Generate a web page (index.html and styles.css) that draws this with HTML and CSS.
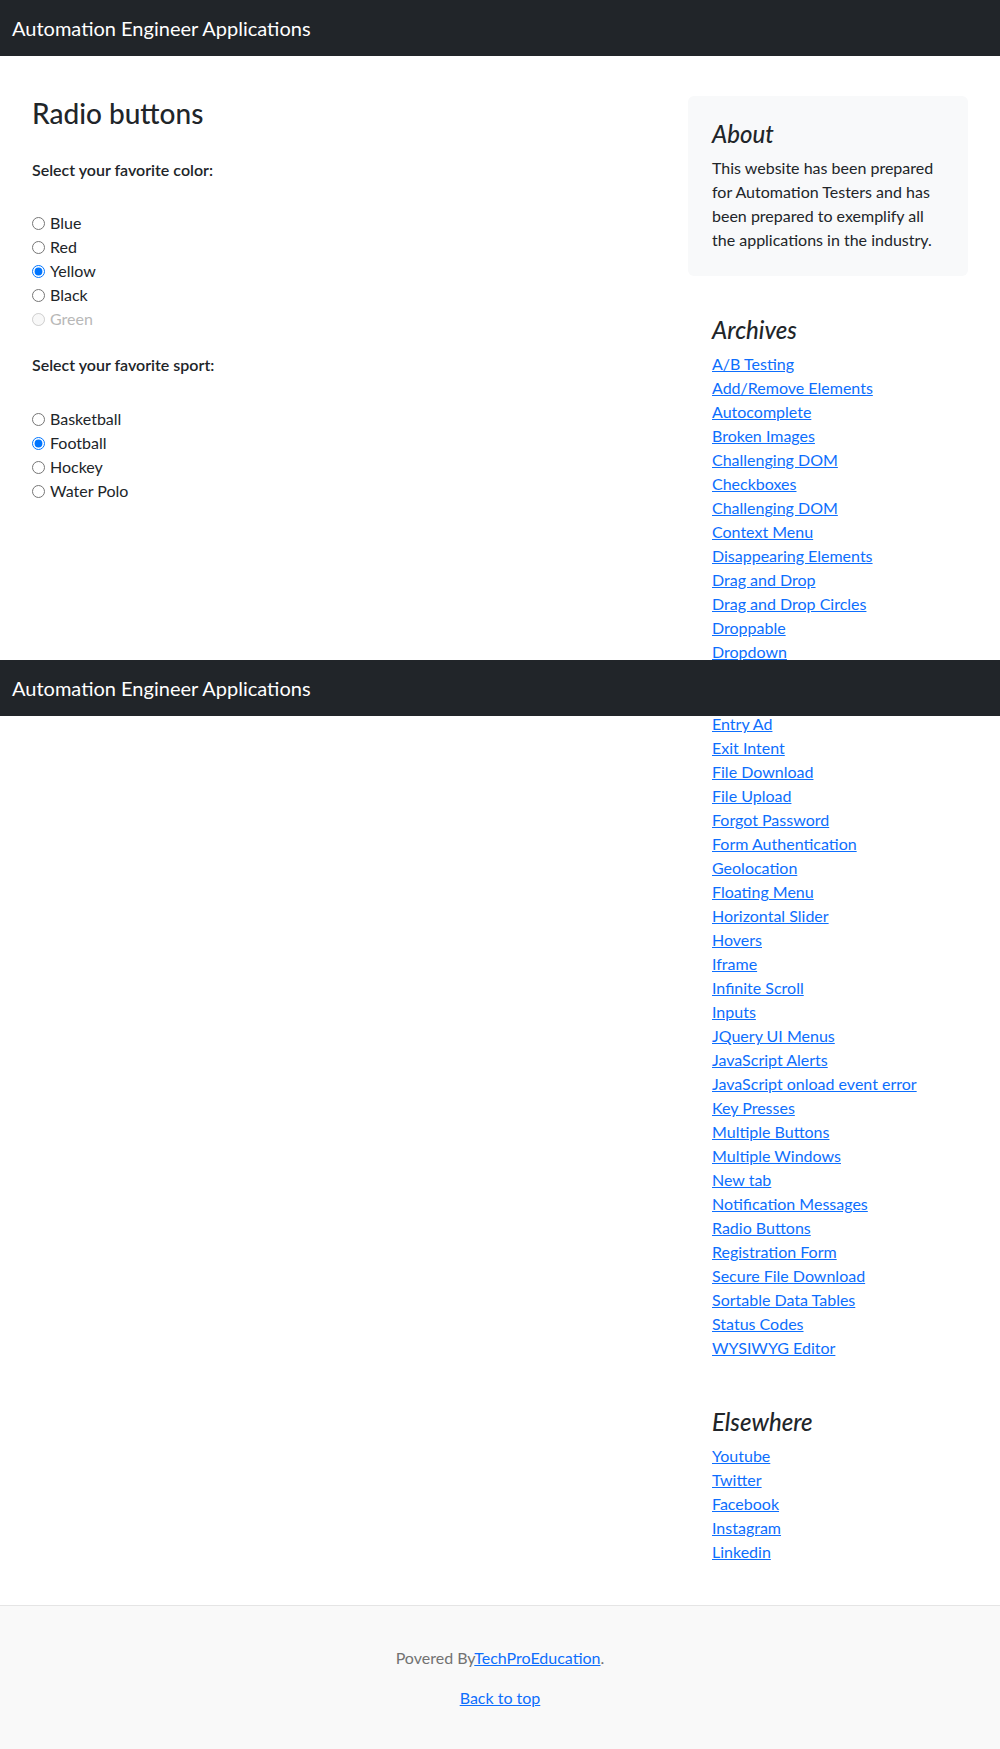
FILE: index.html
```html
<!DOCTYPE html>
<html lang="en">
<head>
<meta charset="utf-8">
<title>Radio buttons</title>
<link rel="stylesheet" href="styles.css">
</head>
<body>
<header class="navbar">
  <a class="brand" href="#">Automation Engineer Applications</a>
</header>

<main class="container">
  <div class="row">
    <div class="col-main">
      <h3 class="page-title">Radio buttons</h3>
      <div class="group-label">Select your favorite color:</div>
      <div class="options">
        <label class="option"><input type="radio" name="color" value="blue"><span>Blue</span></label>
        <label class="option"><input type="radio" name="color" value="red"><span>Red</span></label>
        <label class="option"><input type="radio" name="color" value="yellow" checked><span>Yellow</span></label>
        <label class="option"><input type="radio" name="color" value="black"><span>Black</span></label>
        <label class="option disabled"><input type="radio" name="color" value="green" disabled><span>Green</span></label>
      </div>
      <div class="group-label second">Select your favorite sport:</div>
      <div class="options">
        <label class="option"><input type="radio" name="sport" value="basketball"><span>Basketball</span></label>
        <label class="option"><input type="radio" name="sport" value="football" checked><span>Football</span></label>
        <label class="option"><input type="radio" name="sport" value="hockey"><span>Hockey</span></label>
        <label class="option"><input type="radio" name="sport" value="waterpolo"><span>Water Polo</span></label>
      </div>
    </div>

    <aside class="col-side">
      <div class="about">
        <h4 class="side-title">About</h4>
        <p class="about-text">This website has been prepared for Automation Testers and has been prepared to exemplify all the applications in the industry.</p>
      </div>

      <div class="side-block">
        <h4 class="side-title">Archives</h4>
        <ol class="links">
          <li><a href="#">A/B Testing</a></li>
          <li><a href="#">Add/Remove Elements</a></li>
          <li><a href="#">Autocomplete</a></li>
          <li><a href="#">Broken Images</a></li>
          <li><a href="#">Challenging DOM</a></li>
          <li><a href="#">Checkboxes</a></li>
          <li><a href="#">Challenging DOM</a></li>
          <li><a href="#">Context Menu</a></li>
          <li><a href="#">Disappearing Elements</a></li>
          <li><a href="#">Drag and Drop</a></li>
          <li><a href="#">Drag and Drop Circles</a></li>
          <li><a href="#">Droppable</a></li>
          <li><a href="#">Dropdown</a></li>
          <li><a href="#">Dynamic Content</a></li>
          <li><a href="#">Dynamic Controls</a></li>
          <li><a href="#">Entry Ad</a></li>
          <li><a href="#">Exit Intent</a></li>
          <li><a href="#">File Download</a></li>
          <li><a href="#">File Upload</a></li>
          <li><a href="#">Forgot Password</a></li>
          <li><a href="#">Form Authentication</a></li>
          <li><a href="#">Geolocation</a></li>
          <li><a href="#">Floating Menu</a></li>
          <li><a href="#">Horizontal Slider</a></li>
          <li><a href="#">Hovers</a></li>
          <li><a href="#">Iframe</a></li>
          <li><a href="#">Infinite Scroll</a></li>
          <li><a href="#">Inputs</a></li>
          <li><a href="#">JQuery UI Menus</a></li>
          <li><a href="#">JavaScript Alerts</a></li>
          <li><a href="#">JavaScript onload event error</a></li>
          <li><a href="#">Key Presses</a></li>
          <li><a href="#">Multiple Buttons</a></li>
          <li><a href="#">Multiple Windows</a></li>
          <li><a href="#">New tab</a></li>
          <li><a href="#">Notification Messages</a></li>
          <li><a href="#">Radio Buttons</a></li>
          <li><a href="#">Registration Form</a></li>
          <li><a href="#">Secure File Download</a></li>
          <li><a href="#">Sortable Data Tables</a></li>
          <li><a href="#">Status Codes</a></li>
          <li><a href="#">WYSIWYG Editor</a></li>
        </ol>
      </div>

      <div class="side-block">
        <h4 class="side-title">Elsewhere</h4>
        <ol class="links">
          <li><a href="#">Youtube</a></li>
          <li><a href="#">Twitter</a></li>
          <li><a href="#">Facebook</a></li>
          <li><a href="#">Instagram</a></li>
          <li><a href="#">Linkedin</a></li>
        </ol>
      </div>
    </aside>
  </div>
</main>

<footer class="footer">
  <p>Povered By<a href="#">TechProEducation</a>.</p>
  <p><a href="#">Back to top</a></p>
</footer>

<div class="navbar navbar-fixed">
  <a class="brand" href="#">Automation Engineer Applications</a>
</div>
</body>
</html>
```

FILE: styles.css
```css
* {
  box-sizing: border-box;
}

html, body {
  margin: 0;
  padding: 0;
}

body {
  position: relative;
  font-family: Lato, "Liberation Sans", sans-serif;
  font-size: 16px;
  line-height: 24px;
  color: #212529;
  background: #fff;
}

a {
  color: #0d6efd;
  text-decoration: underline;
}

/* Navbar */
.navbar {
  height: 56px;
  background: #212529;
  display: flex;
  align-items: center;
  padding: 0 12px;
}

.brand {
  color: #fff;
  font-size: 20px;
  line-height: 30px;
  text-decoration: none;
  white-space: nowrap;
}

.navbar-fixed {
  position: absolute;
  top: 660px;
  left: 0;
  right: 0;
}

/* Layout */
.container {
  width: 960px;
  margin: 0 auto;
  padding: 40px 12px 17px;
}

.row {
  display: flex;
  margin: 0 -24px;
}

.col-main {
  flex: 0 0 66.6667%;
  padding: 0 24px;
}

.col-side {
  flex: 0 0 33.3333%;
  padding: 0 24px;
}

/* Main column */
.page-title {
  margin: 0 0 28px;
  font-size: 28px;
  line-height: 34px;
  font-weight: 500;
}

.group-label {
  font-weight: 600;
  margin-bottom: 29px;
}

.group-label.second {
  margin-top: 22px;
  margin-bottom: 30px;
}

.options {
  display: flex;
  flex-direction: column;
}

.option {
  display: flex;
  align-items: center;
  height: 24px;
}

.option input {
  width: 13px;
  height: 13px;
  margin: 0 5px 0 0;
}

.option.disabled {
  color: #b8b8b8;
}

/* Sidebar */
.about {
  background: #f8f9fa;
  border-radius: 6px;
  padding: 24px;
  margin-bottom: 16px;
}

.side-title {
  margin: 0 0 8px;
  font-size: 24px;
  line-height: 28px;
  font-weight: 500;
  font-style: italic;
}

.about-text {
  margin: 0;
}

.side-block {
  padding: 24px;
}

.links {
  list-style: none;
  margin: 0;
  padding: 0;
}

/* Footer */
.footer {
  border-top: 1px solid #e5e5e5;
  background: #f9f9f9;
  color: #727272;
  text-align: center;
  padding: 40px 0;
}

.footer p {
  margin: 0 0 16px;
}

.footer p:last-child {
  margin-bottom: 0;
}
```
